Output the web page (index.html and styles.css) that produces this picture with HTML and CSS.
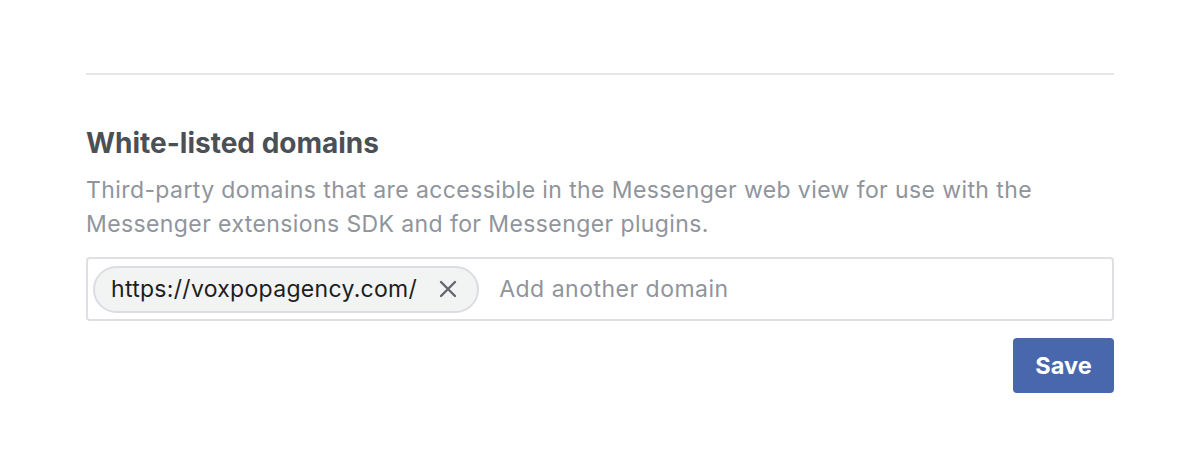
FILE: index.html
```html
<!DOCTYPE html>
<html lang="en">
  <head>
    <meta charset="UTF-8" />
    <meta name="viewport" content="width=device-width, initial-scale=1.0" />
    <title>White-listed domains</title>
    <link rel="stylesheet" href="styles.css">
  </head>
  <body>
    <div class="settings">
      <hr class="divider" />

      <section class="domains">
        <h2>White-listed domains</h2>
        <p class="hint">
          Third-party domains that are accessible in the Messenger web view for use with the
          Messenger extensions SDK and for Messenger plugins.
        </p>

        <div class="token-input">
          <span class="token">
            https://voxpopagency.com/
            <button class="token-remove" aria-label="Remove">
              <svg width="18" height="18" viewBox="0 0 18 18">
                <path d="M2 2 L16 16 M16 2 L2 16" stroke="#606770" stroke-width="2.4" stroke-linecap="round" fill="none" />
              </svg>
            </button>
          </span>
          <input type="text" class="token-field" placeholder="Add another domain" />
        </div>

        <div class="actions">
          <button class="save-button">Save</button>
        </div>
      </section>
    </div>
  </body>
</html>
```

FILE: styles.css
```css
body {
  font-family: Inter, "Noto Sans", sans-serif;
  margin: 0;
  background: #ffffff;
}

.settings {
  width: 1028px;
  margin-left: 86px;
  padding-top: 73px;
}

.divider {
  border: none;
  height: 2px;
  background: #e5e6e9;
  margin: 0;
}

.domains {
  padding-top: 50px;
}

.domains h2 {
  margin: 0;
  font-size: 28px;
  font-weight: 700;
  color: #4b4f56;
  line-height: 36px;
}

.hint {
  margin: 12px 0 16px;
  font-size: 23px;
  letter-spacing: 0.4px;
  line-height: 34px;
  color: #90949c;
}

.token-input {
  display: flex;
  align-items: center;
  height: 64px;
  box-sizing: border-box;
  border: 2px solid #dddfe2;
  border-radius: 4px;
  padding: 0 5px;
}

.token {
  display: inline-flex;
  align-items: center;
  height: 47px;
  box-sizing: border-box;
  padding: 0 20px 0 16px;
  border: 2px solid #dadde1;
  border-radius: 24px;
  background: #f2f3f3;
  font-size: 23px;
  letter-spacing: 0.3px;
  color: #1c1e21;
}

.token-remove {
  display: flex;
  border: none;
  background: none;
  padding: 0;
  margin-left: 22px;
  cursor: pointer;
}

.token-field {
  flex: 1;
  border: none;
  outline: none;
  margin-left: 20px;
  padding: 0;
  font-family: inherit;
  font-size: 23px;
  letter-spacing: 0.5px;
  color: #1c1e21;
}

.token-field::placeholder {
  color: #90949c;
}

.actions {
  display: flex;
  justify-content: flex-end;
  margin-top: 17px;
}

.save-button {
  width: 101px;
  height: 55px;
  border: none;
  border-radius: 4px;
  background: #4867ad;
  color: #ffffff;
  font-family: inherit;
  font-size: 23.5px;
  font-weight: 700;
  cursor: pointer;
}
```
